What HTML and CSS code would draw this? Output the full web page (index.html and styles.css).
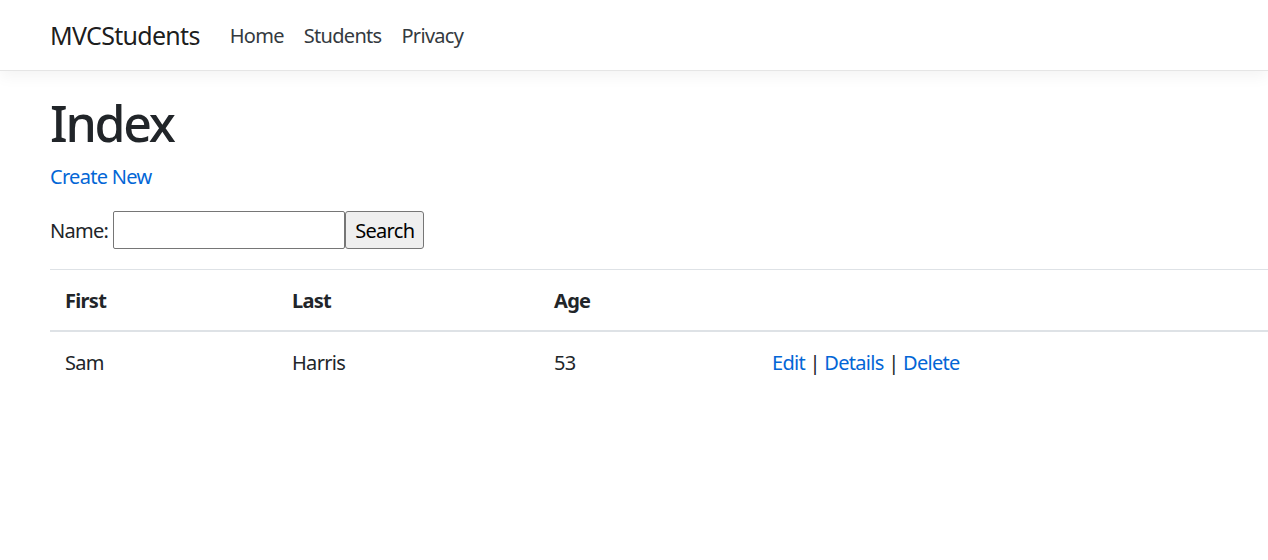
FILE: index.html
```html
<!DOCTYPE html>
<html lang="en">
<head>
<meta charset="utf-8">
<title>Index - MVCStudents</title>
<link rel="stylesheet" href="styles.css">
</head>
<body>
<header class="site-header">
  <nav class="navbar">
    <a class="brand" href="#">MVCStudents</a>
    <ul class="nav">
      <li><a class="nav-link" href="#">Home</a></li>
      <li><a class="nav-link" href="#">Students</a></li>
      <li><a class="nav-link" href="#">Privacy</a></li>
    </ul>
  </nav>
</header>
<main class="main">
  <h1 class="title">Index</h1>
  <p class="para para-link"><a class="link" href="#">Create New</a></p>
  <form class="para search-form">
    <label class="label" for="name">Name:</label>
    <input class="text-input" id="name" type="text"><button class="btn" type="button">Search</button>
  </form>
  <table class="table">
    <thead>
      <tr>
        <th class="c1">First</th>
        <th class="c2">Last</th>
        <th class="c3">Age</th>
        <th class="c4"></th>
      </tr>
    </thead>
    <tbody>
      <tr>
        <td>Sam</td>
        <td>Harris</td>
        <td>53</td>
        <td><a class="link" href="#">Edit</a> | <a class="link" href="#">Details</a> | <a class="link" href="#">Delete</a></td>
      </tr>
    </tbody>
  </table>
</main>
</body>
</html>
```
FILE: styles.css
```css
html, body {
  margin: 0;
  padding: 0;
  overflow: hidden;
}
body {
  font-family: "Noto Sans", "Open Sans", sans-serif;
  font-size: 20px;
  line-height: 30px;
  color: #212529;
  background: #fff;
  letter-spacing: -0.035em;
}
.site-header {
  border-bottom: 1px solid #e5e5e5;
  box-shadow: 0 5px 15px rgba(0, 0, 0, 0.05);
  margin-bottom: 20px;
  background: #fff;
}
.navbar {
  display: flex;
  align-items: center;
  height: 70px;
  padding: 2px 0 0 50px;
  box-sizing: border-box;
}
.brand {
  font-size: 25px;
  line-height: 37.5px;
  color: rgba(0, 0, 0, 0.9);
  text-decoration: none;
  margin-right: 20px;
  padding: 6px 0;
}
.nav {
  display: flex;
  list-style: none;
  margin: 0;
  padding: 0;
}
.nav-link {
  display: block;
  padding: 10px;
  color: #343a40;
  text-decoration: none;
}
.main {
  padding-left: 50px;
}
.title {
  font-size: 50px;
  line-height: 60px;
  font-weight: 500;
  margin: 0 0 8px;
  padding-top: 2px;
  letter-spacing: -0.045em;
}
.para {
  margin: 0 0 20px;
}
.para-link {
  padding-top: 1px;
  margin-bottom: 19px;
}
.link {
  color: #0366d6;
  text-decoration: none;
}
.search-form {
  display: flex;
  align-items: center;
  height: 38px;
}
.label {
  margin-right: 5px;
  padding-top: 1px;
}
.text-input {
  box-sizing: border-box;
  width: 232px;
  height: 38px;
  margin: 0;
  border: 1px solid #767676;
  border-radius: 2px;
  padding: 2px 3px;
  font: inherit;
}
.btn {
  box-sizing: border-box;
  width: 79px;
  height: 38px;
  margin: 0;
  padding: 1px 0 0;
  background: #efefef;
  border: 1px solid #767676;
  border-radius: 3px;
  font: inherit;
  color: #000;
  letter-spacing: -0.035em;
}
.table {
  width: 100%;
  border-collapse: collapse;
  color: #212529;
}
.table th, .table td {
  padding: 16px 15px 14px;
  text-align: left;
  vertical-align: top;
  border-top: 1px solid #dee2e6;
}
.table thead th {
  border-bottom: 2px solid #dee2e6;
  font-weight: 700;
}
.table tbody td {
  border-top: 0;
}
.c1 { width: 197px; }
.c2 { width: 232px; }
.c3 { width: 188px; }
```
